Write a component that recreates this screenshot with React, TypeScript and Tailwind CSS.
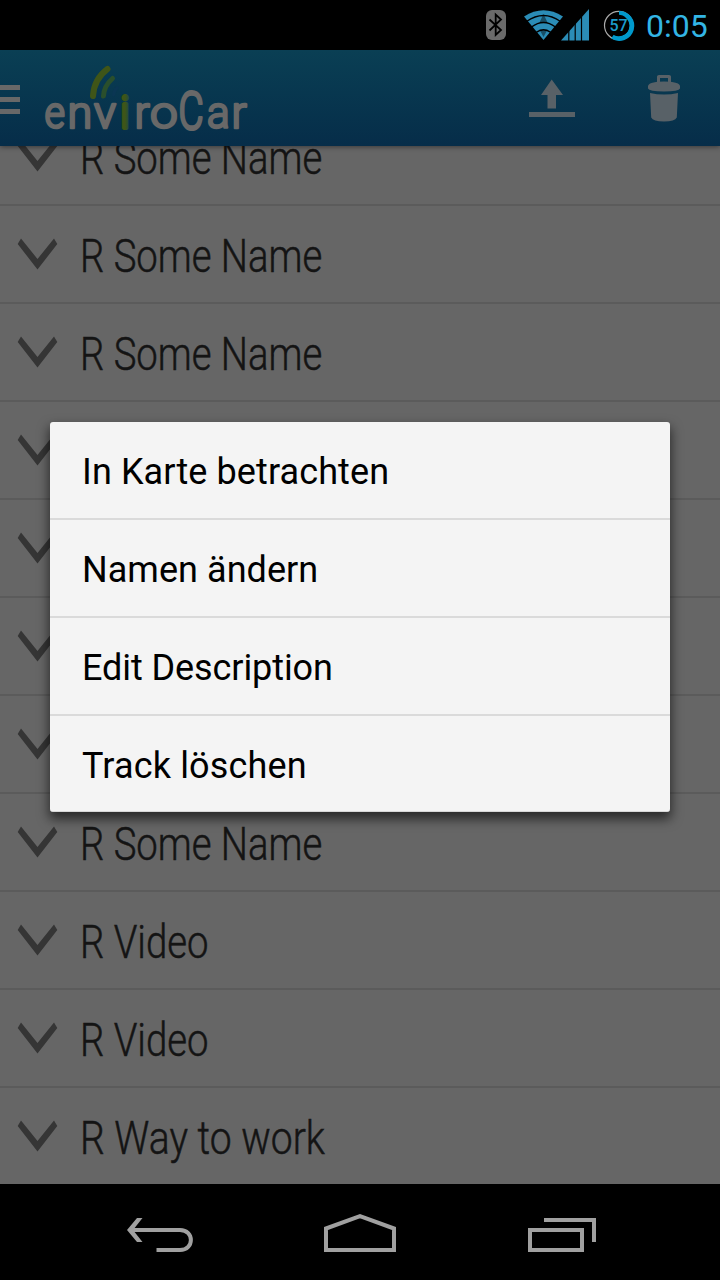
const tracks = [
  { name: 'R Some Name', fit: 'scale-x-[0.832]' },
  { name: 'R Some Name', fit: 'scale-x-[0.832]' },
  { name: 'R Some Name', fit: 'scale-x-[0.832]' },
  { name: 'R Some Name', fit: 'scale-x-[0.832]' },
  { name: 'R Some Name', fit: 'scale-x-[0.832]' },
  { name: 'R Some Name', fit: 'scale-x-[0.832]' },
  { name: 'R Some Name', fit: 'scale-x-[0.832]' },
  { name: 'R Some Name', fit: 'scale-x-[0.832]' },
  { name: 'R Video', fit: 'scale-x-[0.833]' },
  { name: 'R Video', fit: 'scale-x-[0.833]' },
  { name: 'R Way to work', fit: 'scale-x-[0.85]' },
];

const actions = [
  { label: 'In Karte betrachten', tracking: 'tracking-[0.1px]' },
  { label: 'Namen ändern', tracking: 'tracking-[0.05px]' },
  { label: 'Edit Description', tracking: 'tracking-[-0.08px]' },
  { label: 'Track löschen', tracking: 'tracking-[0.15px]' },
];

function StatusBar() {
  return (
    <div className="flex h-[50px] shrink-0 items-center justify-end bg-black pr-[12px]">
      <svg className="h-[50px] w-[166px]" viewBox="480 0 166 50">
        <rect x="486" y="10" width="20" height="30" rx="6" fill="#6a6a6a" />
        <path d="M489.5 19.500 L501 30 L495.700 35 V14.500 L501 19.500 L489.500 30.500" fill="none" stroke="#000" strokeWidth="1.8" />
        <path d="M543.500 40 L524 16.500 Q543.500 4 563 16.500 Z" fill="#2b8cb6" />
        <path d="M543.500 14 L547.500 22.500 H539.500 Z M543.500 37 L539.500 29.500 H547.500 Z" fill="#174e66" />
        <g fill="none" stroke="#000" strokeWidth="1.5">
          <path d="M526.500 21.500 Q543.500 9.500 560.500 21.500" />
          <path d="M531.500 27 Q543.500 18 555.500 27" />
          <path d="M536 32.500 Q543.500 27 551 32.500" />
        </g>
        <path d="M561 40.500 L589 9 V40.500 Z" fill="#2b8cb6" />
        <path d="M568.800 20 V41 M575.200 20 V41 M581.500 10 V41" stroke="#000" strokeWidth="1.2" />
        <circle cx="618.700" cy="25.500" r="14.200" fill="none" stroke="#aaa" strokeWidth="1.200" />
        <path d="M619 13.500 A12.500 12.500 0 1 1 612.500 36.500" fill="none" stroke="#0099cc" strokeWidth="5" />
        <circle cx="618.500" cy="25.500" r="10.700" fill="#000" />
        <text x="618.500" y="31" textAnchor="middle" fontFamily="Roboto, sans-serif" fontSize="16" fontWeight="500" fill="#1b9ccc">57</text>
      </svg>
      <span className="w-[62px] whitespace-nowrap pt-[1px] text-[32px] leading-[50px] text-[#33b5e5]">0:05</span>
    </div>
  );
}

function Logo() {
  return (
    <svg className="ml-[20px] h-[96px] w-[210px]" viewBox="40 50 210 96">
      <defs>
        <linearGradient id="leaf" x1="0" x2="1">
          <stop offset="0.5" stopColor="#3f5518" />
          <stop offset="1" stopColor="#164b49" />
        </linearGradient>
      </defs>
      <g fill="none" strokeLinecap="round">
        <path d="M93 96 Q94 79 107.500 69" stroke="#3f5518" strokeWidth="6" />
        <path d="M103.500 96 Q104 86 112.500 78.500" stroke="#2a4f2c" strokeWidth="5" />
        <path d="M113.500 95 Q114 90 117.500 87.500" stroke="#0a3653" strokeWidth="3" />
      </g>
      <g fontFamily="Roboto, sans-serif" fontWeight="300" fontSize="45" fill="#686868" stroke="#686868" strokeWidth="2.600" strokeLinejoin="round">
        <text transform="translate(44.500 128.300) scale(0.88 1)">e</text>
        <text transform="translate(67.500 128.300) scale(1 1)">n</text>
        <text transform="translate(94 128.300) scale(1.02 1)">v</text>
        <text x="120" y="128" fill="url(#leaf)" stroke="url(#leaf)" strokeWidth="3.800">i</text>
        <text transform="translate(134.500 128.300) scale(1 1)">r</text>
        <text transform="translate(150 128.300) scale(1.1 1)">o</text>
        <text transform="translate(178.500 128.600) scale(0.86 1.150)">C</text>
        <text transform="translate(207 128.300) scale(0.94 1)">a</text>
        <text transform="translate(231.500 128.300) scale(1 1)">r</text>
      </g>
    </svg>
  );
}

function ActionBar() {
  return (
    <header className="relative z-10 flex h-[96px] shrink-0 items-center bg-linear-to-b from-[#0a3f54] to-[#062d49] shadow-[0_1px_5px_rgba(0,0,0,0.45)]">
      <div className="mt-[3px] flex w-[20px] flex-col gap-[7px]">
        <div className="h-[5px] bg-[#686868]" />
        <div className="h-[5px] bg-[#686868]" />
        <div className="h-[5px] bg-[#686868]" />
      </div>
      <Logo />
      <svg className="ml-auto h-[96px] w-[200px]" viewBox="520 50 200 96" fill="#586167">
        <path d="M551.700 79.500 L563 95 H556 V108.500 H547.500 V95 H541 Z" />
        <path d="M529 112 H575 V117 H529 Z" />
        <path fillRule="evenodd" d="M657 83 V76.500 Q657 75 659 75 H669 Q671 75 671 76.500 V83 Z M660 78 V82 H668 V78 Z" />
        <path d="M648 86 Q649 81.500 664 81.500 Q679 81.500 680 86 V88.500 Q679 91.500 664 91.500 Q649 91.500 648 88.500 Z" />
        <path d="M650 93 Q664 96 678 93 L676.800 117.500 Q675 121.500 664 121.500 Q653 121.500 651.200 117.500 Z" />
      </svg>
    </header>
  );
}

function TrackList() {
  return (
    <main className="min-h-0 flex-1 overflow-hidden bg-[#666]">
      <ul className="-mt-[38px]">
        {tracks.map((track, i) => (
          <li key={i} className="flex h-[98px] items-start border-b-2 border-[#5b5b5b]">
            <svg className="ml-[17px] mt-[32px] h-[32px] w-[41px] shrink-0" viewBox="17 238 41 32">
              <path d="M21 238.500 L37.500 259 L54 238.500 L57.300 244 L37.500 269.500 L17.700 244 Z" fill="#353535" />
            </svg>
            <span className={`ml-[22px] mt-[20px] origin-left whitespace-nowrap text-[46px] font-light leading-[60px] text-[#141414] [-webkit-text-stroke:0.5px_#141414] ${track.fit}`}>
              {track.name}
            </span>
          </li>
        ))}
      </ul>
    </main>
  );
}

function NavigationBar() {
  return (
    <nav className="flex h-[96px] shrink-0 items-center justify-center bg-black">
      <svg className="h-[96px] w-[720px]" viewBox="0 1184 720 96" fill="none" stroke="#a0a0a0" strokeWidth="4">
        <path d="M130 1230 H180 C194.500 1230 194.500 1250 180 1250 H156.500" />
        <path d="M137 1218 H142.500 L133 1230 L142.500 1242 H137 L127 1230 Z" fill="#a0a0a0" stroke="none" />
        <path d="M326 1250 V1228.500 L360 1216.200 L394 1228.500 V1250 Z" />
        <path d="M530 1230 H582 V1250 H530 Z M544 1220 H594 V1242" />
      </svg>
    </nav>
  );
}

function ContextMenu() {
  return (
    <div className="absolute left-[50px] top-[422px] z-20 flex h-[390px] w-[620px] flex-col overflow-hidden rounded-[3px] border-b border-[#d8d8d8] bg-[#f4f4f4] shadow-[0_6px_12px_1px_rgba(0,0,0,0.6)]" role="menu">
      {actions.map(({ label, tracking }) => (
        <div key={label} role="menuitem" className={`h-[98px] shrink-0 border-b-2 border-[#dadada] pl-[32px] text-[36px] leading-[101px] text-black last:border-b-0 ${tracking}`}>
          {label}
        </div>
      ))}
    </div>
  );
}

export default function App() {
  return (
    <div className="relative flex h-[1280px] w-[720px] flex-col overflow-hidden bg-black font-[Roboto,sans-serif]">
      <StatusBar />
      <ActionBar />
      <TrackList />
      <NavigationBar />
      <ContextMenu />
    </div>
  );
}
